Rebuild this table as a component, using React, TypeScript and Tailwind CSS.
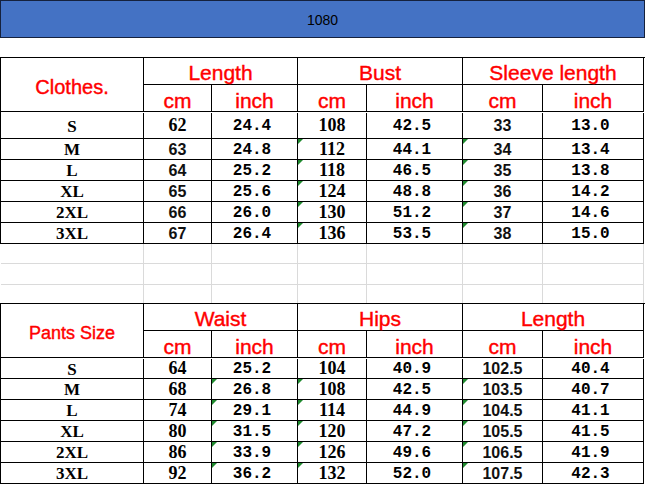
import type { ReactNode } from "react"

type Face = "label" | "serif" | "mono" | "sans"

const faceClass: Record<Face, string> = {
  label: "font-['Liberation_Serif',serif] font-bold text-[17px] text-black pt-[1px]",
  serif: "font-['Liberation_Serif',serif] font-bold text-[18px] text-black pb-[1px]",
  mono: "font-['Liberation_Mono',monospace] font-bold text-[16px] text-black pt-[1px]",
  sans: "font-['Liberation_Sans',sans-serif] font-bold text-[16px] text-[#111] pt-[1px]",
}

const head =
  "font-['Liberation_Sans',sans-serif] text-[#ff0000] [-webkit-text-stroke:0.4px_#ff0000]"

const cols = "grid grid-cols-[143px_68px_86px_69px_96px_80px_101px]"

const Cell = ({
  children,
  className = "",
  flag = false,
}: {
  children?: ReactNode
  className?: string
  flag?: boolean
}) => (
  <div
    className={`relative flex items-center justify-center border-r border-b border-black leading-none ${className}`}
  >
    {flag && (
      <span className="absolute left-0 top-0 h-0 w-0 border-t-[5px] border-r-[5px] border-t-[#1f8a2e] border-r-transparent" />
    )}
    {children}
  </div>
)

type Row = string[]

const SizeTable = ({
  title,
  titleClass,
  groups,
  rows,
  faces,
  flagCols,
  rowsClass,
}: {
  title: string
  titleClass: string
  groups: string[]
  rows: Row[]
  faces: Face[][]
  flagCols: number[]
  rowsClass: string
}) => (
  <div className={`${cols} ${rowsClass} shrink-0 border-l border-t border-black`}>
    <Cell className={`row-span-2 ${head} ${titleClass}`}>{title}</Cell>
    {groups.map((g) => (
      <Cell key={g} className={`col-span-2 pt-[3px] text-[21px] ${head}`}>
        {g}
      </Cell>
    ))}
    {groups.map((g) => [
      <Cell key={g + "cm"} className={`pt-[4px] text-[21px] ${head}`}>
        cm
      </Cell>,
      <Cell key={g + "in"} className={`pt-[4px] text-[21px] ${head}`}>
        inch
      </Cell>,
    ])}
    {rows.map((row, r) =>
      row.map((v, c) => (
        <Cell
          key={r + "-" + c}
          className={`${faceClass[faces[r][c]]} ${r === 0 ? "mt-[1px]" : ""} ${c === 2 || c === 4 || c === 6 ? "pr-[5px]" : ""}`}
          flag={r > 0 && flagCols.includes(c)}
        >
          {v}
        </Cell>
      ))
    )}
  </div>
)

const clothesRows: Row[] = [
  ["S", "62", "24.4", "108", "42.5", "33", "13.0"],
  ["M", "63", "24.8", "112", "44.1", "34", "13.4"],
  ["L", "64", "25.2", "118", "46.5", "35", "13.8"],
  ["XL", "65", "25.6", "124", "48.8", "36", "14.2"],
  ["2XL", "66", "26.0", "130", "51.2", "37", "14.6"],
  ["3XL", "67", "26.4", "136", "53.5", "38", "15.0"],
]

const clothesFaces: Face[][] = clothesRows.map((_, r) => [
  "label",
  r === 0 ? "serif" : "sans",
  "mono",
  "serif",
  "mono",
  "sans",
  "mono",
])

const pantsRows: Row[] = [
  ["S", "64", "25.2", "104", "40.9", "102.5", "40.4"],
  ["M", "68", "26.8", "108", "42.5", "103.5", "40.7"],
  ["L", "74", "29.1", "114", "44.9", "104.5", "41.1"],
  ["XL", "80", "31.5", "120", "47.2", "105.5", "41.5"],
  ["2XL", "86", "33.9", "126", "49.6", "106.5", "41.9"],
  ["3XL", "92", "36.2", "132", "52.0", "107.5", "42.3"],
]

const pantsFaces: Face[][] = pantsRows.map(() => [
  "label",
  "serif",
  "mono",
  "serif",
  "mono",
  "sans",
  "mono",
])

// empty spreadsheet rows between the two tables
const Gridlines = () => (
  <div className={`${cols} grid-rows-[20px_21px_18px] shrink-0 pl-px`}>
    {Array.from({ length: 21 }).map((_, i) => (
      <div
        key={i}
        className={`border-r border-[#dadada] ${i < 14 ? "border-b" : ""}`}
      />
    ))}
  </div>
)

const App = () => {
  return (
    <div className="flex h-[484px] w-[645px] flex-col overflow-hidden bg-white">
      <div className="flex h-[38px] w-[645px] shrink-0 items-center justify-center border border-[#15213d] bg-[#4472c4] pt-[2px] font-['Liberation_Sans',sans-serif] text-[14px] text-black">
        1080
      </div>
      <div className="h-[19px] shrink-0" />
      <SizeTable
        title="Clothes."
        titleClass="text-[20px] pt-[4px]"
        groups={["Length", "Bust", "Sleeve length"]}
        rows={clothesRows}
        faces={clothesFaces}
        flagCols={[3, 5]}
        rowsClass="grid-rows-[27px_27px_27px_21px_21px_21px_21px_21px]"
      />
      <Gridlines />
      <SizeTable
        title="Pants Size"
        titleClass="text-[18px] pt-[4px]"
        groups={["Waist", "Hips", "Length"]}
        rows={pantsRows}
        faces={pantsFaces}
        flagCols={[2, 3, 5]}
        rowsClass="grid-rows-[27px_27px_21px_21px_21px_21px_21px_21px]"
      />
    </div>
  )
}

export default App
